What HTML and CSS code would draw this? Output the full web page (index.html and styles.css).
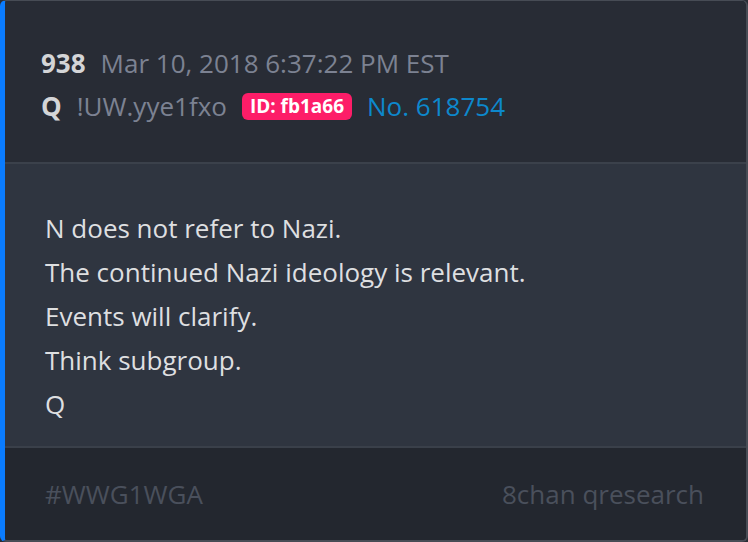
FILE: index.html
```html
<!DOCTYPE html>
<html>
<head>
<meta charset="utf-8">
<link rel="stylesheet" href="styles.css">
</head>
<body>
<div class="card">
  <div class="head">
    <div class="row"><span class="num">938</span><span class="meta">Mar 10, 2018 6:37:22 PM EST</span></div>
    <div class="row"><span class="num">Q</span><span class="meta">!UW.yye1fxo</span><span class="badge">ID: fb1a66</span><span class="postno">No. 618754</span></div>
  </div>
  <div class="body">
    <p>N does not refer to Nazi.</p>
    <p>The continued Nazi ideology is relevant.</p>
    <p>Events will clarify.</p>
    <p>Think subgroup.</p>
    <p>Q</p>
  </div>
  <div class="foot">
    <span>#WWG1WGA</span>
    <span>8chan qresearch</span>
  </div>
</div>
</body>
</html>
```
FILE: styles.css
```css
html, body {
  margin: 0;
  padding: 0;
  background: #2a2e36;
}
body {
  font-family: "Open Sans", sans-serif;
  width: 748px;
  height: 542px;
}
.card {
  box-sizing: border-box;
  width: 748px;
  height: 542px;
  border: 1px solid #474c55;
  border-right-width: 2px;
  border-bottom-width: 2px;
  border-left: 5px solid #0a7cff;
  border-radius: 6px;
  overflow: hidden;
  display: flex;
  flex-direction: column;
  background: #282c35;
}
.head {
  height: 163px;
  box-sizing: border-box;
  padding: 45px 0 0 36px;
  background: #282c35;
  border-bottom: 2px solid #3b414b;
  display: flex;
  flex-direction: column;
  gap: 8px;
}
.row {
  display: flex;
  align-items: center;
  font-size: 26px;
  line-height: 35px;
  height: 35px;
}
.num {
  font-weight: 700;
  color: #d4d5d7;
  margin-right: 15px;
}
.meta {
  color: #7c8292;
}
.badge {
  background: #fd1d68;
  color: #ffffff;
  font-weight: 700;
  font-size: 19px;
  line-height: 27px;
  padding: 0 8px;
  border-radius: 6px;
  margin-left: 15px;
}
.postno {
  color: #0d88cc;
  margin-left: 15px;
}
.body {
  height: 284px;
  box-sizing: border-box;
  background: #2f3540;
  padding: 42px 0 0 40px;
  border-bottom: 2px solid #3a404a;
}
.body p {
  margin: 0;
  font-size: 26px;
  line-height: 44px;
  color: #dedfe0;
}
.foot {
  flex: 1;
  background: #23272f;
  display: flex;
  justify-content: space-between;
  align-items: center;
  padding: 0 42px 0 40px;
  font-size: 26px;
  color: #4a505c;
}
```
